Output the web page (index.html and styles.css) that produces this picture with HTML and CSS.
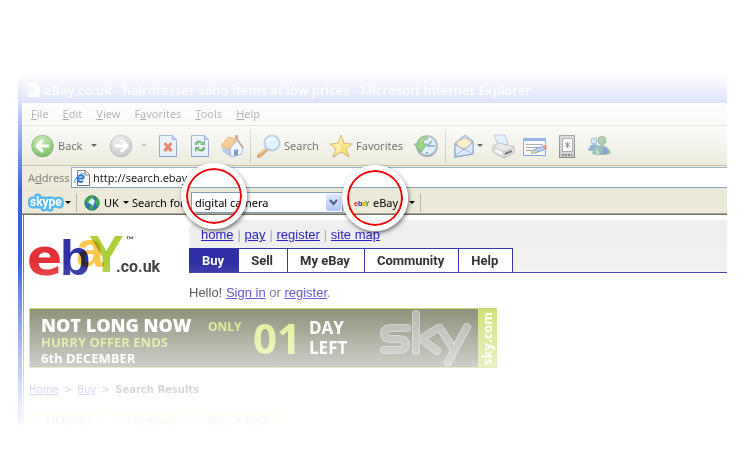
FILE: index.html
```html
<!DOCTYPE html>
<html lang="en">
<head>
<meta charset="utf-8">
<title>eBay.co.uk</title>
<link rel="stylesheet" href="styles.css">
</head>
<body>
<div class="stage">
<div class="window">
  <header class="titlebar">
    <svg width="16" height="16" viewBox="0 0 16 16"><path d="M3 1h8l4 4v10H3z" fill="#fff"/><path d="M9 8H3.500a3 3 0 0 0 5 2.500M3.500 8a3 3 0 0 1 5.500 0M1 12C1 6 8 3 10 4" fill="none" stroke="#8d9db5" stroke-width="1.500"/></svg>
    <span>eBay.co.uk - hairdresser soho items at low prices - Microsoft Internet Explorer</span>
  </header>
  <nav class="menu">
    <a href="#"><u>F</u>ile</a><a href="#"><u>E</u>dit</a><a href="#"><u>V</u>iew</a><a href="#">F<u>a</u>vorites</a><a href="#"><u>T</u>ools</a><a href="#"><u>H</u>elp</a>
  </nav>
  <div class="toolbar">
    <button><svg width="24" height="24" viewBox="0 0 24 24"><defs><radialGradient id="gr" cx=".4" cy=".3" r=".8"><stop offset="0" stop-color="#9be070"/><stop offset="1" stop-color="#319811"/></radialGradient></defs><circle cx="11.500" cy="12" r="10.800" fill="url(#gr)" stroke="#468b38"/><path d="M18 12H6M12 6l-6 6 6 6" fill="none" stroke="#fff" stroke-width="3"/></svg>Back</button>
    <button class="drop" aria-label="Back history"></button>
    <button aria-label="Forward"><svg width="24" height="24" viewBox="0 0 24 24"><defs><radialGradient id="gg" cx=".4" cy=".3" r=".8"><stop offset="0" stop-color="#ddd"/><stop offset="1" stop-color="#aaa"/></radialGradient></defs><circle cx="12" cy="12" r="10.800" fill="url(#gg)" stroke="#999"/><path d="M6 12h12M12 6l6 6-6 6" fill="none" stroke="#fff" stroke-width="3"/></svg></button>
    <button class="drop pale" aria-label="Forward history"></button>
    <button aria-label="Stop"><svg width="24" height="24" viewBox="0 0 24 24"><path d="M3.500 1.500h13l4 4v17h-17z" fill="#dce9ff" stroke="#5878bd"/><path d="M16.500 1.500v4h4" fill="#8eb0eb" stroke="#5878bd"/><path d="M8.500 9l7 8m0-8l-7 8" stroke="#df3c12" stroke-width="3"/></svg></button>
    <button aria-label="Refresh"><svg width="24" height="24" viewBox="0 0 24 24"><path d="M3.500 1.500h13l4 4v17h-17z" fill="#dce9ff" stroke="#5878bd"/><path d="M16.500 1.500v4h4" fill="#8eb0eb" stroke="#5878bd"/><path d="M8 11c0-4 4-4 6-2M16 13c0 4-4 4-6 2" fill="none" stroke="#258c25" stroke-width="2.400"/><path d="M17 6v5h-5zM7 18v-5h5z" fill="#258c25"/></svg></button>
    <button aria-label="Home"><svg width="24" height="24" viewBox="0 0 24 24"><path d="M15 1h3v8h-3z" fill="#b85342"/><path d="M2 13l9 2v8l-8-5z" fill="#90b0df"/><path d="M10 15l7-9 6 7-1 7-11 3z" fill="#eaf0ff" stroke="#8498c5"/><path d="M1 12L8 3l9 2-8 10z" fill="#efaa45" stroke="#c98a31"/><path d="M17 5l6 9" stroke="#8b6540" stroke-width="1.500"/><path d="M14 16l4-1v6l-4 1z" fill="#436ba7"/></svg></button>
    <i class="sep"></i>
    <button><svg width="24" height="24" viewBox="0 0 24 24"><path d="M2 22l8-7" stroke="#c57927" stroke-width="4" stroke-linecap="round"/><path d="M2 21l7-6" stroke="#efb566" stroke-width="1.500"/><circle cx="15" cy="9" r="7.500" fill="#c9ecff" stroke="#8aabd1" stroke-width="2"/><path d="M10 8q3-5 7-3" stroke="#fff" stroke-width="2" fill="none"/></svg>Search</button>
    <button><svg width="24" height="24" viewBox="0 0 24 24"><path d="M12 1l3 8 8 1-6 5 3 8-8-5-8 5 3-8-6-5 8-1z" fill="#f9d030" stroke="#b98629"/><path d="M12 4v12l-7 5 3-7-5-3 7-1z" fill="#fff3a8" opacity=".6"/></svg>Favorites</button>
    <button aria-label="History"><svg width="24" height="24" viewBox="0 0 24 24"><circle cx="13" cy="12" r="10" fill="#cbe6f5" stroke="#778c99" stroke-width="2"/><path d="M13 12l5-5M13 12h6M13 4v2M21 12h-2M13 20v-2" stroke="#376b94" stroke-width="1.500"/><path d="M13 3C7 2 4 6 4 10H0l7 8 6-8H9c0-3 1-4 4-5z" fill="#57b936" stroke="#33852b"/></svg></button>
    <i class="sep"></i>
    <button aria-label="Mail"><svg width="24" height="24" viewBox="0 0 24 24"><path d="M3 9L13 1l8 6v13L3 23z" fill="#7ea6dc" stroke="#496da8"/><path d="M5 8l8-4 6 4-1 6H6z" fill="#ffe2a0" stroke="#d49c54"/><path d="M3 10l9 6 9-8v12L3 23z" fill="#c8defd" stroke="#496da8"/><path d="M3 22l9-7 9 5" fill="none" stroke="#7197d1"/></svg></button>
    <button class="drop" aria-label="Mail options"></button>
    <button aria-label="Print"><svg width="24" height="24" viewBox="0 0 24 24"><path d="M3 1h11l3 9-9 3z" fill="#d3e7ff" stroke="#7193c4"/><path d="M2 12l6-3 15 4v6l-10 5-11-6z" fill="#ddd" stroke="#999"/><path d="M2 13l11 5 10-5M13 18v5" fill="none" stroke="#999"/><path d="M14 20l7-3" stroke="#333" stroke-width="2"/><path d="M5 16l6 3" stroke="#fff" stroke-width="2"/></svg></button>
    <button aria-label="Edit"><svg width="24" height="24" viewBox="0 0 24 24"><path d="M.5 4.500h22v17H.5z" fill="#f4f8ff" stroke="#3d73ce"/><path d="M1 4h21v3H1z" fill="#3d73ce"/><path d="M3 10.500h17M3 13.500h14M3 16.500h9" stroke="#777"/><path d="M8 19l2-3 11-4 2 3-11 4z" fill="#91b7ef" stroke="#446ba8"/><path d="M7 20l3-4 2 3z" fill="#e5ab28"/><circle cx="22" cy="13" r="2" fill="#d75432"/></svg></button>
    <button aria-label="Research"><svg width="24" height="24" viewBox="0 0 24 24"><rect x="4.500" y="1.500" width="15" height="22" fill="#bbb" stroke="#555"/><path d="M7.500 4.500h10v13h-10z" fill="#fff" stroke="#777"/><path d="M12.500 8v6M10 9l5 4m0-4l-5 4" stroke="#444"/><path d="M7 21h10" stroke="#555" stroke-width="2" stroke-dasharray="2 1"/></svg></button>
    <button aria-label="Messenger"><svg width="24" height="24" viewBox="0 0 24 24"><circle cx="7" cy="7" r="3" fill="#b7d6ff" stroke="#5681bb"/><path d="M1 16q2-6 6-6t6 5l-3 2H3z" fill="#4d85c4"/><circle cx="15" cy="6.500" r="4" fill="#71b36b" stroke="#477c58"/><path d="M5 20q2-9 9-9 7 0 10 8l-5 2H10z" fill="#5f9b86"/><path d="M15 12l1 8 6-1q-1-5-7-7z" fill="#4974cb"/><path d="M9 14l4 6H9z" fill="#9cd5b2"/></svg></button>
  </div>
  <form class="address">
    <label for="url">A<u>d</u>dress</label>
    <div class="field">
      <svg width="16" height="16" viewBox="0 0 16 16"><path d="M3.500.5h8l4 4v11h-12z" fill="#fff" stroke="#666"/><path d="M11 1v4h4" fill="none" stroke="#666"/><path d="M10 8.500H3.500A3.300 3.300 0 0 0 9 11M3.500 8a3.300 3.300 0 0 1 6.500 0" fill="none" stroke="#1767c9" stroke-width="2"/><path d="M1 13C-1 9 7 2 11 4" fill="none" stroke="#3d8be0"/></svg>
      <input id="url" value="http://search.ebay">
    </div>
  </form>
  <form class="skype">
    <button type="button" class="brand" aria-label="Skype"><svg width="36" height="16" viewBox="0 0 36 16"><text x="3" y="11" class="skype-word">skype</text></svg></button>
    <i class="drop"></i><i class="sep"></i>
    <button type="button" class="region"><svg width="16" height="16" viewBox="0 0 16 16"><circle cx="8" cy="8" r="7.200" fill="#3272b3" stroke="#284"/><path d="M2 4q4-4 7-3 2 3-2 4l-1 3-3 1zM12 3l3 4-1 5-3-3zM6 10l4 2-2 3-3-2z" fill="#43aa52"/><path d="M4 7l4-4 3 3-2 5z" fill="#dcf4e8"/></svg>UK<i class="drop"></i></button>
    <label for="query">Search for:</label>
    <div class="combo"><input id="query" value="digital camera"><button type="button" aria-label="Show list"><svg width="9" height="7" viewBox="0 0 9 7"><path d="M1 1l3.500 4L8 1" fill="none" stroke="#4d6185" stroke-width="2"/></svg></button></div>
    <button type="button" class="provider"><svg width="16" height="12" viewBox="0 0 16 12"><g class="mini"><text x="0" y="9" fill="#e00018">e</text><text x="4" y="9" fill="#2020c0">b</text><text x="8" y="9" fill="#f0a000">a</text><text x="11" y="9" fill="#289a28">Y</text></g></svg>eBay</button>
    <i class="drop"></i><i class="sep"></i>
  </form>
  <main>
    <div class="masthead">
      <svg class="logo" width="136" height="48" viewBox="0 0 136 48">
        <text x="-2" y="42" class="l-e">e</text><text x="31" y="42" class="l-b">b</text><text x="47" y="34" class="l-a">a</text><text x="60" y="39" class="l-y">Y</text>
        <text x="97" y="9" class="tm">™</text><text x="87" y="39" class="co">.co.uk</text>
      </svg>
      <div class="mainnav">
        <nav class="quick"><a href="#">home</a><i>|</i><a href="#">pay</a><i>|</i><a href="#">register</a><i>|</i><a href="#">site map</a></nav>
        <nav class="tabs"><a href="#" class="on">Buy</a><a href="#">Sell</a><a href="#">My eBay</a><a href="#">Community</a><a href="#">Help</a></nav>
        <p class="hello"><b>Hello!</b> <a href="#">Sign in</a> or <a href="#">register</a>.</p>
      </div>
    </div>
    <section class="banner">
      <div class="offer"><strong>NOT LONG NOW</strong><em>HURRY OFFER ENDS</em><span>6th DECEMBER</span></div>
      <div class="only">ONLY</div><div class="num">01</div><div class="left">DAY<br>LEFT</div>
      <svg class="sky" width="98" height="58" viewBox="0 0 98 58"><defs><path id="sky-lines" d="M27 19H13q-9 0-9 5 0 6 8 6h6q8 0 8 6 0 5-9 5H4M36 5v37M58 19L44 28q-2 2 0 4l13 10M60 19l14 22M87 18L68 53"/></defs><g fill="none" stroke-linecap="round" stroke-linejoin="round"><use href="#sky-lines" stroke="#a9b4b4" stroke-width="8"/><use href="#sky-lines" stroke="#8a9080" stroke-width="6"/></g></svg>
      <div class="side">sky.com</div>
    </section>
    <nav class="crumbs"><a href="#">Home</a> <span>&gt;</span> <a href="#">Buy</a> <span>&gt;</span> <b>Search Results</b></nav>
    <nav class="filters"><a href="#">All Items</a><a href="#">Auctions</a><a href="#">Buy It Now</a></nav>
  </main>
</div>
<div class="lens lens-query"></div>
<div class="lens lens-provider"></div>
</div>
</body>
</html>
```
FILE: styles.css
```css
* { box-sizing: border-box; }
body { margin: 0; background: #fff; font: 11px/14px "Noto Sans", "Open Sans", sans-serif; color: #000; }
button { border: 0; padding: 0; background: none; font: inherit; color: inherit; display: flex; align-items: center; }
input { border: 0; padding: 0; background: transparent; font: inherit; color: inherit; min-width: 0; outline: 0; }
svg { display: block; flex: none; overflow: visible; }
i { font-style: normal; }

.stage { position: relative; padding: 73px 21px 0 18px; }
.window {
  border-left: 4px solid #3c5ee2;
  border-radius: 8px 0 0 0;
  overflow: hidden;
  mask-image: linear-gradient(#0000 0, #0003 30px, #0005 41px, #0009 73px, #000f 118px, #000 190px, #000b 222px, #0005 290px, #0003 317px, #0000 357px);
}
.titlebar { height: 30px; display: flex; align-items: center; gap: 3px; padding: 4px 0 0 3px; background: #5a74ee; color: #fff; font: 600 13px/18px "Open Sans", sans-serif; white-space: nowrap; }
.menu { height: 23px; display: flex; gap: 14px; padding: 4px 9px 0; background: #f5f5ee; border-bottom: 1px solid #c9c6b3; }
.menu a { color: #222; text-decoration: none; }
.toolbar {
  height: 40px; display: grid; align-items: center; padding-left: 9px;
  grid-template-columns: 59px 19px 31px 16px 32px 32px 30px 7px 72px 85px 31px 7px 24px 15px 32px 32px 32px 24px;
  background: linear-gradient(#f4f4ef, #e6e4d2); border-bottom: 1px solid #b9b18a; white-space: nowrap; color: #111;
}
.toolbar button { gap: 3px; }
.drop { width: 0; height: 0; border: 3px solid transparent; border-top-color: #000; border-bottom: 0; padding: 0; justify-self: start; margin-left: 1px; }
.pale { border-top-color: #aaa; }
.sep { width: 1px; height: 34px; background: #b9b6a0; }

.address { height: 23px; display: flex; align-items: center; padding-left: 6px; background: #ece9d8; }
.address label { width: 43px; color: #77756a; }
.field { flex: 1; height: 21px; display: flex; align-items: center; gap: 3px; padding-left: 2px; border: 1px solid #7f9db9; border-right: 0; background: #fff; }
.field input { flex: 1; }
.skype { height: 26px; display: flex; align-items: center; padding: 2px 0 0 5px; background: #ece9d8; border-bottom: 1px solid #716f64; box-shadow: inset 0 -1px #aca899; white-space: nowrap; }
.skype .sep { height: 18px; margin-left: 5px; }
.skype-word { font: bold 12px Roboto, sans-serif; fill: #fff; stroke: #58b9ee; stroke-width: 5px; stroke-linejoin: round; paint-order: stroke; }
.region { gap: 4px; margin-left: 7px; width: 48px; }
.skype .drop { margin-left: 2px; }
.skype .region .drop { margin-left: 0; }
.skype label { width: 59px; }
.combo { width: 152px; height: 21px; display: flex; border: 1px solid #7f9db9; background: #fff; padding: 1px 1px 1px 3px; }
.combo input { flex: 1; }
.combo button { width: 15px; justify-content: center; background: linear-gradient(#dce7ff, #b3c7f5); border-radius: 2px; }
.provider { gap: 3px; margin-left: 11px; width: 53px; }
.mini { font: bold 7px "Liberation Sans", sans-serif; }

main { padding: 5px 0 0 5px; border-left: 1px solid #777; margin-left: 1px; background: #fff; height: 215px; }
.masthead { display: flex; height: 88px; }
.logo { margin-top: 13px; margin-right: 24px; }
.logo text { mix-blend-mode: multiply; }
.l-e { font: bold 52px "DejaVu Sans", sans-serif; fill: #e43137; }
.l-b { font: bold 50px "Liberation Sans Narrow", "Liberation Sans", sans-serif; fill: #2d31a4; }
.l-a { font: bold 50px "Liberation Sans Narrow", "Liberation Sans", sans-serif; fill: #fbc74b; }
.l-y { font: bold 52px "Liberation Sans", sans-serif; fill: #afcf3a; }
.tm { font: bold 8px "Liberation Sans", sans-serif; fill: #444; }
.co { font: bold 16px Roboto, sans-serif; fill: #3a3a3a; }
.mainnav { flex: 1; font: 13px/16px "Liberation Sans", sans-serif; }
.mainnav a { color: #2c20c8; }
.quick { height: 28px; padding: 7px 0 0 12px; display: flex; gap: 4px; background: #efefef; border-radius: 12px 0 0 0; }
.quick i { width: 3px; color: #a9a0e8; }
.tabs { height: 25px; display: flex; background: #f1f1f1; border-bottom: 1px solid #3434ad; }
.mainnav .tabs a { padding: 4px 14px 0 12px; border: 1px solid #3434ad; border-width: 1px 1px 0 0; background: #fff; color: #333; font: bold 13px/16px Roboto, sans-serif; text-decoration: none; }
.mainnav .tabs .on { background: #2f2fa5; color: #fff; padding-left: 13px; }
.hello { margin: 12px 0 0; color: #555; }
.hello b { font-weight: normal; color: #222; }

.banner { width: 468px; height: 60px; display: flex; border: 1px solid #afc637; border-right: 0; background: linear-gradient(#50562d, #5f624f); font-family: "Open Sans", sans-serif; font-weight: bold; color: #fff; line-height: 16px; white-space: nowrap; }
.offer { width: 167px; padding: 7px 0 0 11px; display: flex; flex-direction: column; }
.offer strong { font-size: 18px; line-height: 18px; }
.offer em { font-size: 13px; font-style: normal; color: #bfdc4b; }
.offer span { font-size: 13px; }
.only { width: 45px; margin-left: 11px; padding-top: 10px; color: #bfdc4b; font-size: 12px; }
.num { width: 56px; color: #cfe65a; font-size: 42px; line-height: 58px; }
.left { width: 71px; padding-top: 9px; font-size: 17px; line-height: 20px; }
.side { flex: 1; background: #b5d233; writing-mode: vertical-rl; transform: rotate(180deg); text-align: center; font-size: 13px; line-height: 18px; }
.crumbs { margin-top: 14px; font: 10px/16px "DejaVu Sans", sans-serif; color: #333; }
.crumbs span { margin: 0 2px; }
.crumbs a { color: #3a28d0; }
.filters { display: flex; gap: 4px; margin-top: 12px; }
.filters a { padding: 4px 14px; height: 20px; background: #fff0b0; border-radius: 3px 3px 0 0; font: bold 12px/16px "Liberation Sans", sans-serif; color: #555; text-decoration: none; }

.lens { position: absolute; width: 66px; height: 66px; border: 5px solid #fff; border-radius: 50%; box-shadow: inset 0 0 0 2px #f00000, 1px 2px 4px #0008; pointer-events: none; }
.lens-query { left: 181px; top: 163px; }
.lens-provider { left: 342px; top: 165px; }
```
